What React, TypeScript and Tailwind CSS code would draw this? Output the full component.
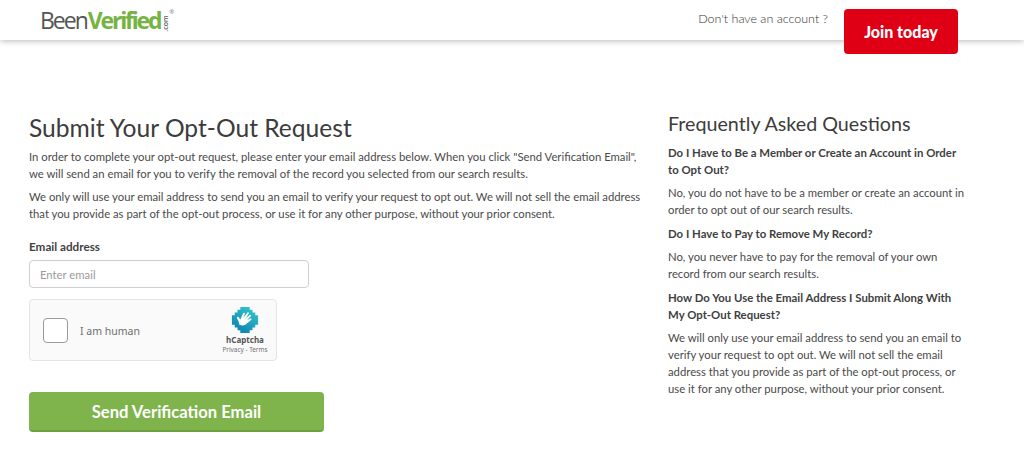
import React from 'react';

const HandLogo = () => (
  <svg width="28" height="28" viewBox="0 0 30 30">
    <defs>
      <linearGradient id="badge" x1="0.8" y1="0" x2="0.2" y2="1">
        <stop offset="0" stopColor="#35c6c9" />
        <stop offset="1" stopColor="#0a7fb0" />
      </linearGradient>
    </defs>
    {/* pixelated badge */}
    <path fill="url(#badge)" d="M10 1h10v3h3v3h3v3h3v10h-3v3h-3v3h-3v3H10v-3H7v-3H4v-3H1V10h3V7h3V4h3z" />
    <path fill="#ffffff" d="M8 16l-1.600-3c-.5-1.200 1-2 1.800-1l1.800 2.400 3-6.600c.5-1.200 2.200-.5 1.800.7l-1.600 4.300 4.300-5.600c.8-1 2.200 0 1.500 1.100l-3.400 5 4.400-3.600c1-.8 2.100.4 1.200 1.400l-3.800 4 3.400-1.800c1.100-.5 1.800.8.8 1.600l-5 4.200c-1.800 1.600-4.600 2.300-6.700 1C9.600 22 8.800 19 8 16z" />
  </svg>
);

const Logo = () => (
  <div className="flex items-start h-[40px] pt-[6px] -ml-[1px] font-['Open_Sans','Noto_Sans',sans-serif]">
    <span className="text-[23px] leading-[28px] tracking-[-2px] text-[#555555]">Been</span>
    <span className="text-[23px] leading-[28px] tracking-[-2.200px] font-bold text-[#76b343] ml-[1px]">Verified</span>
    <span className="w-[7px] h-[20px] mt-[7px] ml-[1px] flex items-center justify-center">
      <span className="-rotate-90 text-[7px] font-semibold leading-none text-[#5b5b5b]">.com</span>
    </span>
    <span className="text-[6px] leading-none mt-[3px] ml-[1px] text-[#777777]">®</span>
  </div>
);

const FaqItem = ({ q, a }: { q: string; a: string }) => (
  <div>
    <h3 className="font-bold text-[#3f3f3f] text-[11.400px] leading-[17px] mb-[6px]">{q}</h3>
    <p className="text-[11.3px] leading-[17px] mb-[7px]">{a}</p>
  </div>
);

export default function App() {
  return (
    <div className="w-[1024px] h-[459px] overflow-hidden bg-white text-[#4a4a4a] font-['Lato',sans-serif]">
      <header className="h-[40px] pl-[41px] pr-[66px] flex justify-between items-start shadow-[0_1px_6px_rgba(0,0,0,0.28)] relative bg-white">
        <Logo />
        <div className="flex items-start">
          <span className="text-[12.5px] leading-[18px] font-light text-[#333333] mt-[10px] mr-[16px]">Don't have an account ?</span>
          <a className="relative z-10 mt-[9px] w-[114px] h-[45px] rounded-[4px] bg-[#e00015] text-white font-black text-[16px] flex items-center justify-center">Join today</a>
        </div>
      </header>

      <main className="flex pl-[29px] pt-[72px]">
        <section className="w-[639px] shrink-0">
          <h1 className="text-[24.6px] leading-[32px] text-[#3c3c3c] mb-[5px]">Submit Your Opt-Out Request</h1>
          <p className="text-[11.3px] leading-[16.500px] mb-[7px] w-[615px]">In order to complete your opt-out request, please enter your email address below. When you click "Send Verification Email", we will send an email for you to verify the removal of the record you selected from our search results.</p>
          <p className="text-[11.3px] leading-[16.500px] mb-[15px] w-[615px]">We only will use your email address to send you an email to verify your request to opt out. We will not sell the email address that you provide as part of the opt-out process, or use it for any other purpose, without your prior consent.</p>
          <label className="block font-bold text-[11.7px] leading-[18px] text-[#3f3f3f] mb-[5px]">Email address</label>
          <input placeholder="Enter email" className="block w-[280px] h-[28px] px-[10px] border border-[#cfcfcf] rounded-[4px] text-[11.3px] placeholder:text-[#9a9a9a] mb-[11px]" />

          <div className="w-[248px] h-[62px] border border-[#e4e4e4] rounded-[4px] bg-[#fafafa] flex items-center pl-[13px] pr-[8px] mb-[31px]">
            <span className="w-[25px] h-[25px] border border-[#9a9a9a] rounded-[4px] bg-white" />
            <span className="ml-[12px] mt-[3px] text-[10.500px] text-[#6f6f6f] font-['Noto_Sans',sans-serif]">I am human</span>
            <div className="ml-auto w-[46px] flex flex-col items-center font-['Noto_Sans',sans-serif]">
              <HandLogo />
              <span className="text-[8px] leading-[11px] font-bold text-[#555555]">hCaptcha</span>
              <span className="text-[6.400px] leading-[10px] text-[#707070] whitespace-nowrap">Privacy - Terms</span>
            </div>
          </div>

          <button className="w-[295px] h-[40px] pt-[2px] rounded-[4px] bg-[#7eb44b] border-b-2 border-[#6d9f3f] text-white font-bold text-[16.600px]">Send Verification Email</button>
        </section>

        <aside className="w-[298px] shrink-0 -mt-[1px]">
          <h2 className="text-[19.700px] leading-[26px] text-[#3c3c3c] mb-[7px]">Frequently Asked Questions</h2>
          <FaqItem q="Do I Have to Be a Member or Create an Account in Order to Opt Out?" a="No, you do not have to be a member or create an account in order to opt out of our search results." />
          <FaqItem q="Do I Have to Pay to Remove My Record?" a="No, you never have to pay for the removal of your own record from our search results." />
          <FaqItem q="How Do You Use the Email Address I Submit Along With My Opt-Out Request?" a="We will only use your email address to send you an email to verify your request to opt out. We will not sell the email address that you provide as part of the opt-out process, or use it for any other purpose, without your prior consent." />
        </aside>
      </main>
    </div>
  );
}
